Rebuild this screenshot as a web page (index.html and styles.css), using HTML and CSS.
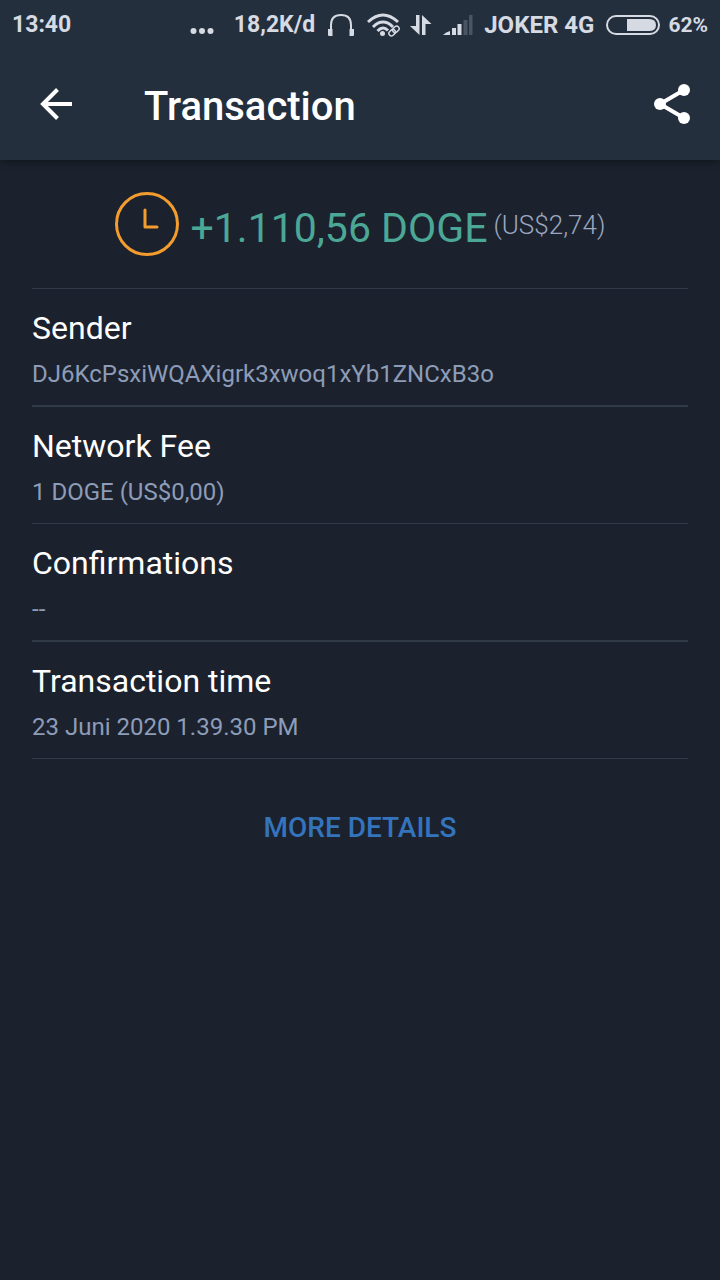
FILE: index.html
```html
<!DOCTYPE html>
<html lang="en">
<head>
<meta charset="utf-8">
<meta name="viewport" content="width=device-width, initial-scale=1">
<title>Transaction</title>
<link rel="stylesheet" href="styles.css">
</head>
<body>
<header class="header">
  <div class="status">
    <span class="clock">13:40</span>
    <svg class="dots" width="24" height="8" viewBox="0 0 24 8" fill="currentColor"><circle cx="3.500" cy="4" r="3"/><circle cx="12" cy="4" r="3"/><circle cx="20.500" cy="4" r="3"/></svg>
    <span class="speed">18,2K/d</span>
    <svg class="headphones" width="28" height="24" viewBox="0 0 28 24"><path d="M4 18V12C4 5 8 2 14 2s10 3 10 10v6" fill="none" stroke="currentColor" stroke-width="2"/><path d="M1 16h4.500v7H2q-1 0-1-1zM27 16h-4.500v7h3.500q1 0 1-1z" fill="currentColor"/></svg>
    <svg class="wifi" width="34" height="24" viewBox="0 0 34 24" fill="none" stroke="currentColor"><g stroke-width="3"><path d="M1 9Q16-5 31 9"/><path d="M6 14Q16 4 26 14"/><path d="M10.500 18Q16 12.500 21 17.500"/></g><circle cx="15.500" cy="20.500" r="2.500" fill="currentColor" stroke="none"/><g stroke-width="1.500" transform="rotate(-42 27 18)"><rect x="21" y="15.500" width="7" height="5" rx="2.500"/><rect x="26" y="15.500" width="7" height="5" rx="2.500"/></g></svg>
    <svg class="data" width="22" height="22" viewBox="0 0 22 22" fill="currentColor"><path d="M6 1h3.500v20L0 12h6zM12 21h3.500v-11h6L12 1z"/></svg>
    <svg class="signal" width="32" height="22" viewBox="0 0 32 22" fill="currentColor"><path d="M1 21q3-3 7-4v4zM10 14h4v7h-4zM15.500 10h4v11h-4z"/><path d="M21.500 6h4v15h-4zM27 1h3.500v20H27z" opacity=".22"/></svg>
    <span class="carrier">JOKER 4G</span>
    <svg class="battery" width="54" height="20" viewBox="0 0 54 20"><rect x="1" y="1" width="52" height="18" rx="9" fill="none" stroke="currentColor" stroke-width="2"/><path d="M21 4h22q7 0 7 6t-7 6H21z" fill="currentColor"/></svg>
    <span class="percent">62%</span>
  </div>
  <div class="toolbar">
    <button class="icon-button" aria-label="Back"><svg width="32" height="32" viewBox="0 0 32 32" fill="none" stroke="currentColor" stroke-width="4"><path d="M32 16H3M17.500 1.500 3 16l14.500 14.500"/></svg></button>
    <h1 class="title">Transaction</h1>
    <button class="icon-button" aria-label="Share"><svg width="36" height="40" viewBox="0 0 36 40" fill="currentColor"><path d="M30 6 6 20l24 14" fill="none" stroke="currentColor" stroke-width="4"/><circle cx="30" cy="6" r="6"/><circle cx="6" cy="20" r="6"/><circle cx="30" cy="34" r="6"/></svg></button>
  </div>
</header>
<main class="content">
  <section class="summary">
    <svg class="pending" width="64" height="64" viewBox="0 0 64 64" fill="none" stroke="currentColor" stroke-width="3"><circle cx="32" cy="32" r="30.500"/><path d="M30 18v17h12" stroke-linecap="round" stroke-linejoin="round"/></svg>
    <span class="amount">+1.110,56 DOGE</span>
    <span class="fiat">(US$2,74)</span>
  </section>
  <dl class="details">
    <div class="row"><dt>Sender</dt><dd>DJ6KcPsxiWQAXigrk3xwoq1xYb1ZNCxB3o</dd></div>
    <div class="row"><dt>Network Fee</dt><dd>1 DOGE (US$0,00)</dd></div>
    <div class="row"><dt>Confirmations</dt><dd>--</dd></div>
    <div class="row"><dt>Transaction time</dt><dd>23 Juni 2020 1.39.30 PM</dd></div>
  </dl>
  <button class="more">MORE DETAILS</button>
</main>
</body>
</html>
```
FILE: styles.css
```css
* { box-sizing: border-box; }
body {
  margin: 0;
  min-height: 100vh;
  background: #1c222d;
  color: #fff;
  font-family: Roboto, "Liberation Sans", sans-serif;
}
svg { display: block; flex: none; }
button {
  border: 0;
  padding: 0;
  background: none;
  color: inherit;
  font: inherit;
  cursor: pointer;
}
.header {
  background: #242f3d;
  box-shadow: 0 2px 8px rgba(0, 0, 0, 0.4);
}
.status {
  display: flex;
  align-items: center;
  height: 48px;
  padding: 2px 12px 0;
  color: #d5dae3;
  font-size: 23px;
  font-weight: 700;
  line-height: 32px;
  white-space: nowrap;
}
.clock { margin-right: auto; }
.dots { margin: 12px 20px 0 0; }
.speed { margin-right: 12px; }
.headphones { margin-right: 12px; }
.wifi { margin-right: 9px; }
.data { margin-right: 10px; }
.signal { margin-right: 10px; }
.carrier { margin-right: 12px; font-size: 24px; }
.battery { margin-right: 8px; }
.percent { font-size: 21px; }
.toolbar {
  display: flex;
  align-items: center;
  height: 112px;
  padding: 0 30px 0 40px;
}
.icon-button { display: flex; }
.title {
  flex: 1;
  margin: 6px 0 0 72px;
  font-size: 40px;
  font-weight: 500;
  line-height: 48px;
}
.content {
  display: flex;
  flex-direction: column;
  padding: 0 32px;
}
.summary {
  display: flex;
  align-items: center;
  justify-content: center;
  height: 129px;
  border-bottom: 1px solid #313a47;
}
.pending { color: #f49d2e; margin-right: 12px; }
.amount {
  margin: 8px 6px 0 0;
  color: #4ba796;
  font-size: 41px;
  line-height: 48px;
}
.fiat {
  margin-top: 2px;
  color: #9aa7c0;
  font-size: 26px;
  font-weight: 300;
  line-height: 32px;
}
.details { margin: 0; }
.row {
  padding: 19px 0 15px;
  border-bottom: 1px solid #313a47;
}
.row:nth-child(odd) { border-bottom-width: 2px; }
dt {
  font-size: 32px;
  line-height: 40px;
}
dd {
  margin: 10px 0 0;
  color: #8d9cb8;
  font-size: 24px;
  line-height: 32px;
  overflow-wrap: anywhere;
}
.more {
  align-self: center;
  margin-top: 45px;
  color: #3474bd;
  font-size: 28px;
  font-weight: 500;
  line-height: 48px;
}
```
